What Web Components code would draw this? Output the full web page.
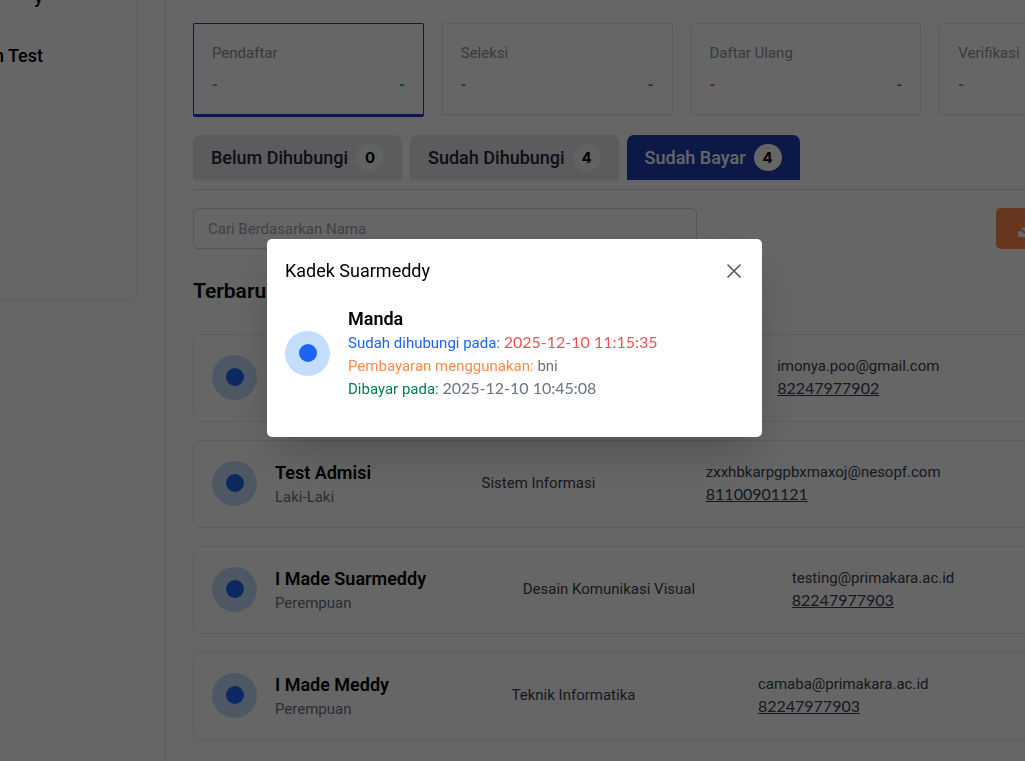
<!DOCTYPE html>
<html lang="id">
<head>
<meta charset="utf-8">
<title>Pendaftar</title>
<style>
  html, body { margin: 0; min-height: 100%; background: #fff; }
  body { font: 15px/22px Roboto, "Open Sans", sans-serif; color: #000; overflow: hidden; }
</style>
</head>
<body>
<app-shell>
  <side-card slot="side"><span>y</span><span>n Test</span></side-card>

  <stat-grid>
    <stat-card active label="Pendaftar"></stat-card>
    <stat-card label="Seleksi"></stat-card>
    <stat-card label="Daftar Ulang"></stat-card>
    <stat-card label="Verifikasi"></stat-card>
  </stat-grid>

  <tab-bar>
    <tab-item count="0">Belum Dihubungi</tab-item>
    <tab-item count="4">Sudah Dihubungi</tab-item>
    <tab-item count="4" active>Sudah Bayar</tab-item>
  </tab-bar>

  <search-row></search-row>

  <applicant-list heading="Terbaru">
    <applicant-row email="imonya.poo@gmail.com" phone="82247977902"></applicant-row>
    <applicant-row name="Test Admisi" gender="Laki-Laki" program="Sistem Informasi" email="zxxhbkarpgpbxmaxoj@nesopf.com" phone="81100901121"></applicant-row>
    <applicant-row name="I Made Suarmeddy" gender="Perempuan" program="Desain Komunikasi Visual" email="testing@primakara.ac.id" phone="82247977903"></applicant-row>
    <applicant-row name="I Made Meddy" gender="Perempuan" program="Teknik Informatika" email="camaba@primakara.ac.id" phone="82247977903"></applicant-row>
  </applicant-list>
</app-shell>

<contact-modal heading="Kadek Suarmeddy">
  <contact-note name="Manda" contacted="2025-12-10 11:15:35" method="bni" paid="2025-12-10 10:45:08"></contact-note>
</contact-modal>

<script>
const define = (name, render) => customElements.define(name, class extends HTMLElement {
  connectedCallback() {
    if (this.shadowRoot) return;
    this.attachShadow({ mode: "open" }).innerHTML =
      "<style>*{box-sizing:border-box}:host{display:block;box-sizing:border-box}</style>" +
      render(key => this.getAttribute(key) ?? "", this);
  }
});

define("app-shell", () => `
  <style>
    :host { display: flex; min-height: 100vh; overflow: hidden; }
    aside { flex: none; width: 165px; padding-right: 27px; }
    main { flex: 1 0 auto; min-width: 1032px; padding: 23px 27px; border-left: 1px solid #e5e7eb; }
  </style>
  <aside><slot name="side"></slot></aside>
  <main><slot></slot></main>`);

define("side-card", () => `
  <style>
    :host { display: flow-root; height: 301px; border: solid #e5e7eb; border-width: 0 1px 1px 0; border-radius: 0 0 9px 0;
            font-size: 18px; font-weight: 500; line-height: 27px; padding-right: 94px; white-space: nowrap; }
    div { display: flex; flex-direction: column; align-items: flex-end; gap: 32px; margin-top: -17px; }
  </style>
  <div><slot></slot></div>`);

define("stat-grid", () => `
  <style>:host { display: grid; grid-template-columns: repeat(4, 1fr); gap: 18px; align-items: start; }</style>
  <slot></slot>`);

define("stat-card", get => `
  <style>
    :host { padding: 18px; border: 1px solid #e5e7eb; border-radius: 2px; box-shadow: 0 1px 2px rgba(0,0,0,.05); }
    :host([active]) { border-color: #1e40af; border-bottom-width: 3px; }
    h3 { margin: 0; font: inherit; color: #8b93a1; }
    div { display: flex; justify-content: space-between; margin-top: 10px; font-weight: 700; }
    .down { color: #f05a28; } .up { color: #059669; }
  </style>
  <h3>${get("label")}</h3>
  <div><span class="down">-</span><span class="up">-</span></div>`);

define("tab-bar", () => `
  <style>:host { display: flex; gap: 8px; margin-top: 18px; padding-bottom: 9px; border-bottom: 1px solid #d8dade; }</style>
  <slot></slot>`);

define("tab-item", get => `
  <style>
    button { display: flex; align-items: center; gap: 8px; height: 45px; padding: 0 18px; border: 0;
             border-radius: 7px 7px 0 0; background: #e5e7eb; color: #1f2937; font: 500 18px/27px Roboto, sans-serif;
             box-shadow: 0 1px 2px rgba(0,0,0,.05); }
    :host([active]) button { background: #1e40af; color: #fff; }
    b { width: 28px; border-radius: 14px; background: #fff; color: #000; font: 700 15px/27px Inter, sans-serif; text-align: center; }
    :host(:not([active])) b { background: #f3f4f6; }
  </style>
  <button type="button"><slot></slot><b>${get("count")}</b></button>`);

define("search-row", () => `
  <style>
    :host { display: flex; justify-content: space-between; margin-top: 18px; }
    input { width: 504px; height: 41px; padding: 0 14px; border: 1px solid #d1d5db; border-radius: 5px; font: inherit; background: #fff; }
    input::placeholder { color: #9ca3af; opacity: 1; }
    button { display: flex; align-items: center; width: 174px; height: 41px; padding: 0 21px; border: 0; border-radius: 5px; background: #ff8a4c; color: #fff; }
  </style>
  <input type="text" placeholder="Cari Berdasarkan Nama" aria-label="Cari Berdasarkan Nama">
  <button type="button" aria-label="Unduh">
    <svg width="18" height="18" viewBox="0 0 18 18" fill="currentColor"><path d="M7.800 1h2.400v7h3.300L9 12.300 3.800 7.800h4zM2 11.200h2.700L9 15l4.300-3.800H16a1 1 0 0 1 1 1V16a1 1 0 0 1-1 1H2a1 1 0 0 1-1-1v-3.800a1 1 0 0 1 1-1z"/></svg>
  </button>`);

define("applicant-list", get => `
  <style>
    :host { display: grid; gap: 18px; margin-top: 27px; }
    h2 { margin: 0 0 9px; font-size: 21px; font-weight: 600; line-height: 31px; }
  </style>
  <h2>${get("heading")}</h2><slot></slot>`);

define("user-dot", () => `
  <style>
    :host { display: grid; place-items: center; flex: none; width: 45px; height: 45px; border-radius: 50%; background: #c3ddfd; }
    i { width: 18px; height: 18px; border-radius: 50%; background: #1c64f2; }
  </style><i></i>`);

define("applicant-row", get => `
  <style>
    :host { display: flex; justify-content: space-between; align-items: center; min-height: 88px; padding: 17px 18px 19px; border: 1px solid #e5e7eb; border-radius: 9px; }
    .who { display: flex; align-items: center; gap: 18px; }
    h3 { margin: 0; font-size: 18px; font-weight: 600; line-height: 27px; }
    h3:empty { width: 153px; }
    p { margin: 0; } .who p { color: #6b7280; }
    .program, .contact { color: #374151; }
    .program:empty { width: 126px; }
    a { color: inherit; }
    .phone { font-family: Lato, sans-serif; font-size: 16px; }
    .end { width: 100px; }
  </style>
  <div class="who"><user-dot></user-dot><div><h3>${get("name")}</h3><p>${get("gender")}</p></div></div>
  <p class="program">${get("program")}</p>
  <div class="contact"><p>${get("email")}</p><p class="phone"><a href="tel:${get("phone")}">${get("phone")}</a></p></div>
  <div class="end"></div>`);

define("contact-modal", get => `
  <style>
    :host { position: fixed; inset: 0; display: flex; justify-content: center; align-items: flex-start;
            padding: 239px 0 0 4px; background: rgba(0,0,0,.6); }
    section { width: 495px; padding: 18px 18px 36px; border-radius: 5px; background: #fff; box-shadow: 0 22px 45px -10px rgba(0,0,0,.25); }
    header { display: flex; justify-content: space-between; align-items: center; margin-bottom: 21px; }
    h2 { margin: 0; font-size: 18px; font-weight: 400; line-height: 27px; }
    button { display: grid; place-items: center; width: 20px; height: 20px; padding: 0; border: 0; background: none; color: #4b5563; }
  </style>
  <section role="dialog" aria-modal="true" aria-label="${get("heading")}">
    <header><h2>${get("heading")}</h2>
      <button type="button" aria-label="Tutup"><svg width="14" height="14" viewBox="0 0 14 14" fill="none" stroke="currentColor" stroke-width="1.600" stroke-linecap="round"><path d="M1 1l12 12M13 1L1 13"/></svg></button>
    </header>
    <slot></slot>
  </section>`);

define("contact-note", get => `
  <style>
    :host { display: flex; align-items: center; gap: 18px; color: #6b7280; }
    h3 { margin: 0; font-size: 18px; font-weight: 600; line-height: 27px; color: #000; }
    p { margin: 0; line-height: 23px; }
    .num { font-family: Lato, sans-serif; font-size: 16px; line-height: 16px; }
    .blue { color: #1c64f2; } .red { color: #f05252; } .orange { color: #ff8a4c; } .green { color: #057a55; }
  </style>
  <user-dot></user-dot>
  <div>
    <h3>${get("name")}</h3>
    <p><span class="blue">Sudah dihubungi pada:</span> <span class="red num">${get("contacted")}</span></p>
    <p><span class="orange">Pembayaran menggunakan:</span> ${get("method")}</p>
    <p><span class="green">Dibayar pada:</span> <span class="num">${get("paid")}</span></p>
  </div>`);
</script>
</body>
</html>
